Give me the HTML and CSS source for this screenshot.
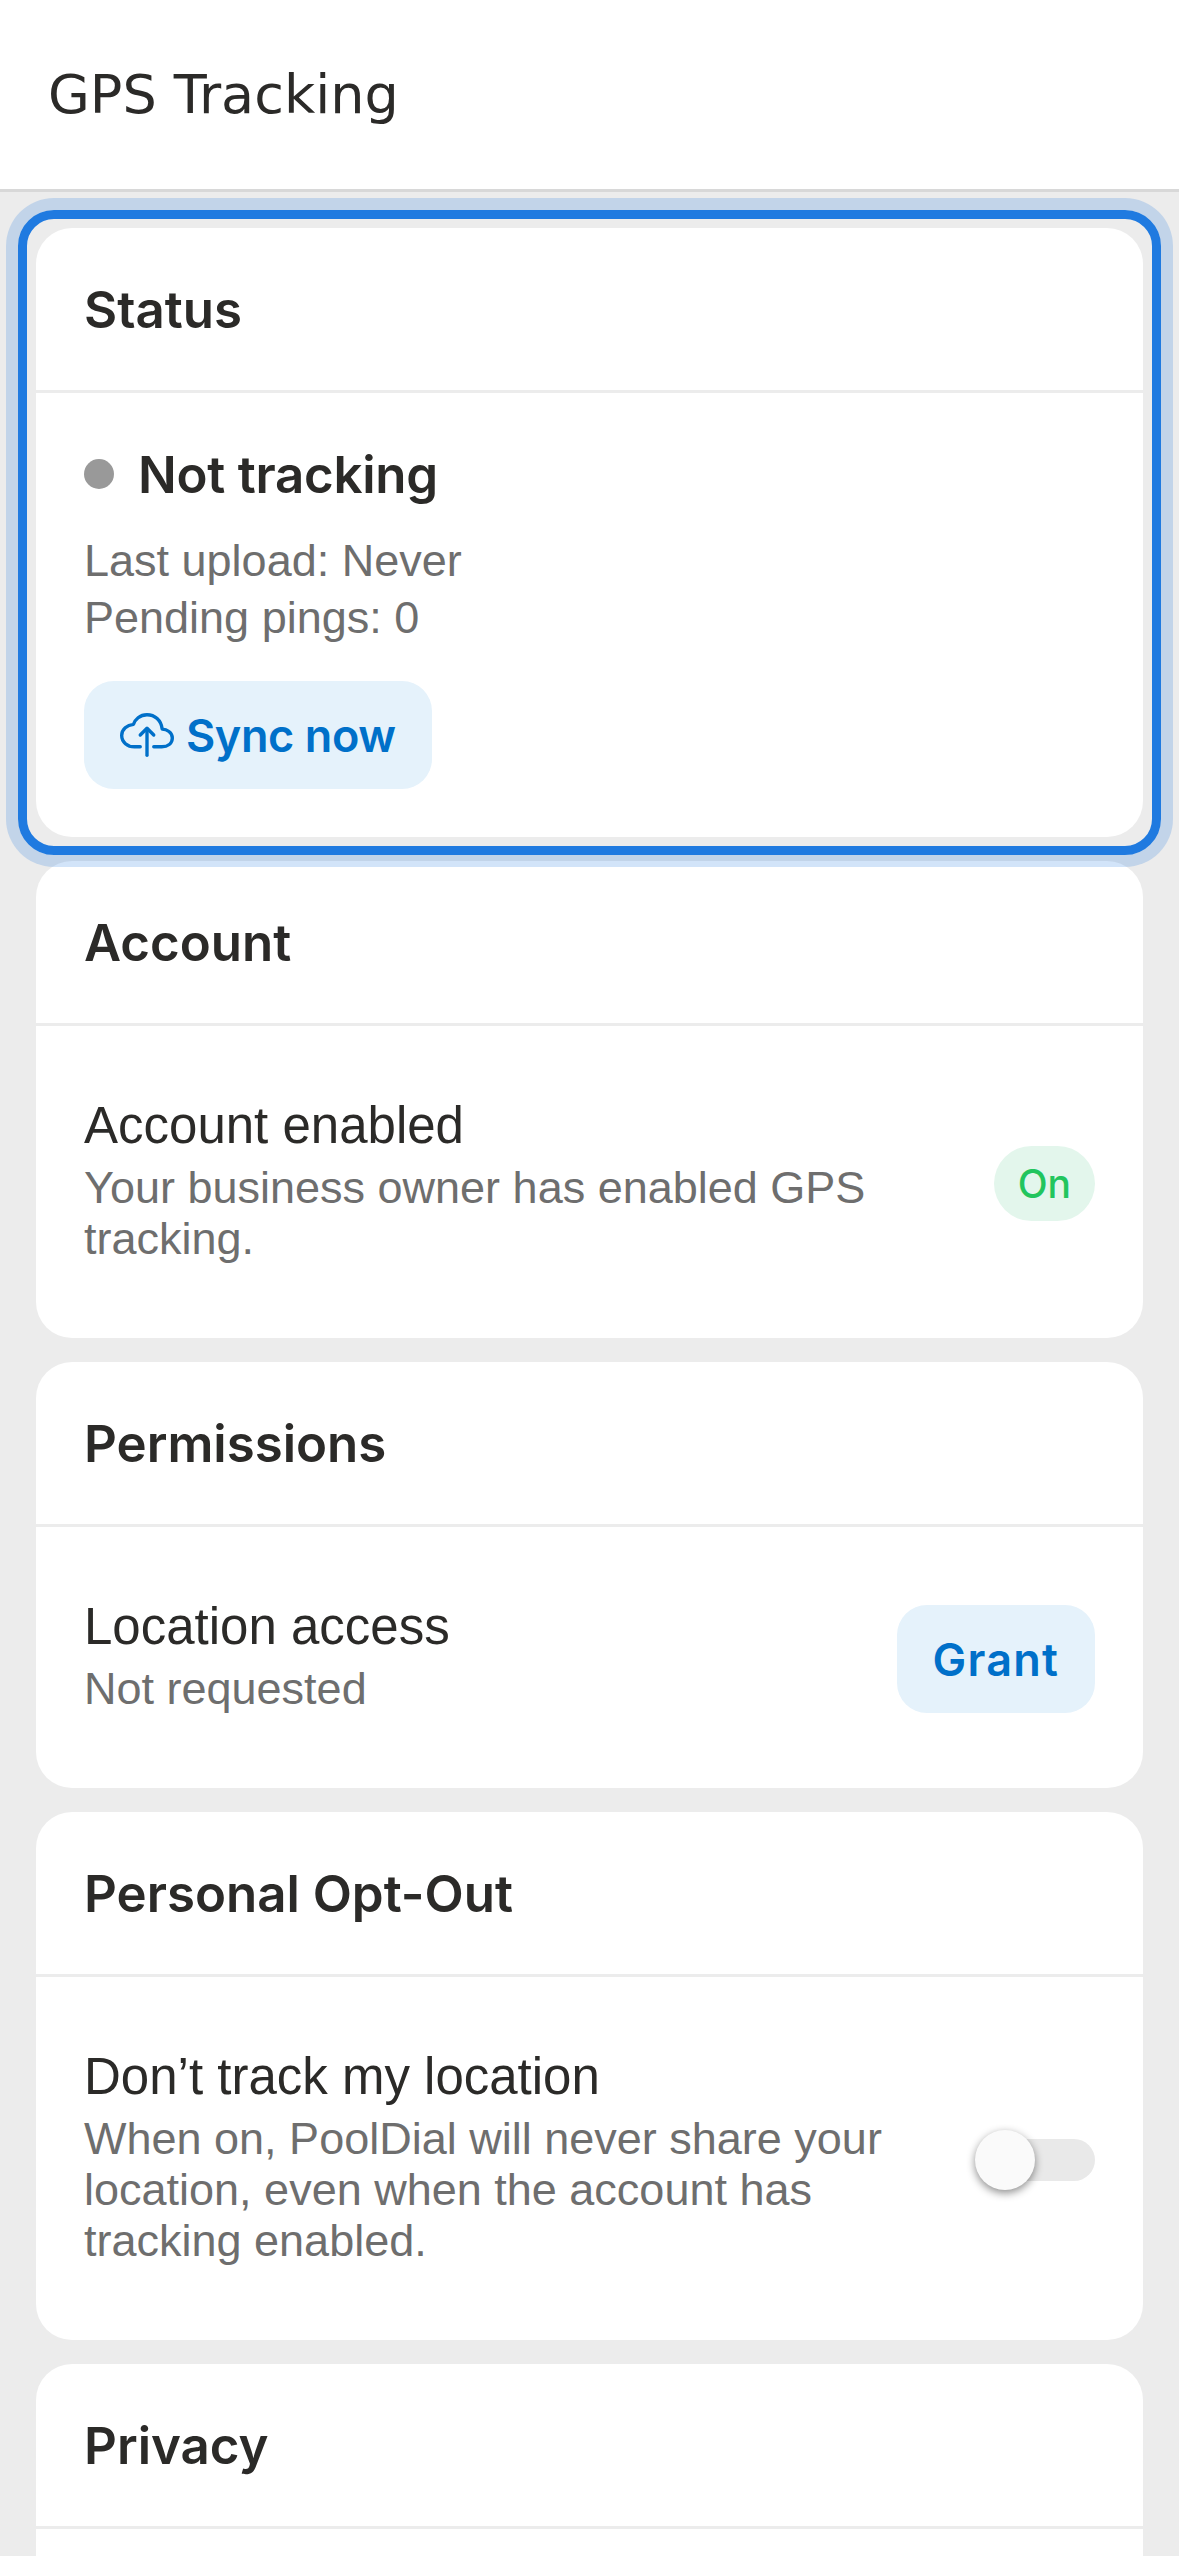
FILE: index.html
```html
<!DOCTYPE html>
<html lang="en">
<head>
    <meta charset="UTF-8">
    <meta name="viewport" content="width=device-width, initial-scale=1.0">
    <title>GPS Tracking</title>
    <link rel="stylesheet" href="styles.css">
</head>
<body>
    <header class="topBar">
        <h1 class="topTitle">GPS Tracking</h1>
    </header>

    <main class="content">
        <!-- status card has keyboard focus in the screenshot -->
        <section class="card focused">
            <h2 class="cardTitle">Status</h2>
            <div class="statusBody">
                <div class="statusRow">
                    <span class="statusDot"></span>
                    <span class="statusText">Not tracking</span>
                </div>
                <p class="statusLine">Last upload: Never</p>
                <p class="statusLine">Pending pings: 0</p>
                <button class="softButton syncButton">
                    <svg class="syncIcon" viewBox="0 0 512 512" fill="none" stroke="currentColor" stroke-width="32" stroke-linecap="round" stroke-linejoin="round">
                        <path d="M320 367.79h76c55 0 100-29.21 100-83.6 0-53.79-53-81.51-96-83.6-8.89-85.06-71-136.8-144-136.8-69 0-113.44 45.79-128 91.2-60 5.7-112 43.88-112 106.4s54 106.4 120 106.4h56"/>
                        <polyline points="320 255.79 256 191.79 192 255.79"/>
                        <line x1="256" y1="448.21" x2="256" y2="207.79"/>
                    </svg>
                    Sync now
                </button>
            </div>
        </section>

        <section class="card">
            <h2 class="cardTitle">Account</h2>
            <div class="row">
                <div class="rowText">
                    <div class="rowLabel">Account enabled</div>
                    <div class="rowHint">Your business owner has enabled GPS tracking.</div>
                </div>
                <span class="pill">On</span>
            </div>
        </section>

        <section class="card">
            <h2 class="cardTitle">Permissions</h2>
            <div class="row">
                <div class="rowText">
                    <div class="rowLabel">Location access</div>
                    <div class="rowHint">Not requested</div>
                </div>
                <button class="softButton grantButton">Grant</button>
            </div>
        </section>

        <section class="card">
            <h2 class="cardTitle">Personal Opt-Out</h2>
            <div class="row">
                <div class="rowText">
                    <div class="rowLabel">Don’t track my location</div>
                    <div class="rowHint">When on, PoolDial will never share your location, even when the account has tracking enabled.</div>
                </div>
                <div class="switch"><span class="switchThumb"></span></div>
            </div>
        </section>

        <section class="card lastCard">
            <h2 class="cardTitle">Privacy</h2>
        </section>
    </main>
</body>
</html>
```

FILE: styles.css
```css
* {
    box-sizing: border-box;
}
html, body {
    margin: 0;
    height: 100%;
}
body {
    height: 2556px;
    overflow: hidden;
    background-color: #ececec;
    color: #2b2a28;
    font-family: "Liberation Sans", Arial, sans-serif;
}
.topBar {
    height: 192px;
    display: flex;
    align-items: center;
    padding: 0 48px;
    background-color: #fff;
    border-bottom: 3px solid #d8d8d8;
}
.topTitle {
    margin: 0;
    font-family: "DejaVu Sans", sans-serif;
    font-size: 54px;
    font-weight: 400;
}
.content {
    display: flex;
    flex-direction: column;
    gap: 24px;
    padding: 36px 36px 0;
}
.card {
    background-color: #fff;
    border-radius: 36px;
}
.focused {
    position: relative;
    z-index: 1;
}
.focused::after {
    content: "";
    position: absolute;
    inset: -18px;
    border: 9px solid #1f7ae0;
    border-radius: 36px;
    box-shadow: 0 0 0 12px rgba(31, 122, 224, 0.2);
    pointer-events: none;
}
.lastCard {
    height: 400px;
}
.cardTitle {
    height: 165px;
    margin: 0;
    padding: 0 48px;
    display: flex;
    align-items: center;
    border-bottom: 3px solid #ececec;
    font-family: Inter, sans-serif;
    font-size: 51px;
    font-weight: 600;
}
.statusBody {
    padding: 48px;
}
.statusRow {
    display: flex;
    align-items: center;
    gap: 24px;
    height: 66px;
    margin-bottom: 25px;
}
.statusDot {
    width: 30px;
    height: 30px;
    border-radius: 50%;
    background-color: #999;
}
.statusText {
    font-family: Inter, sans-serif;
    font-size: 51px;
    font-weight: 600;
    letter-spacing: -0.25px;
}
.statusLine {
    margin: 0;
    font-size: 45px;
    line-height: 57px;
    color: #6e6e6e;
}
.softButton {
    height: 108px;
    display: inline-flex;
    align-items: center;
    padding: 0 36px;
    border: none;
    border-radius: 30px;
    background-color: #e5f2fb;
    color: #0070c9;
    font-family: Inter, sans-serif;
    font-size: 45px;
    font-weight: 600;
}
.syncButton {
    gap: 12px;
    margin-top: 35px;
    letter-spacing: -0.4px;
}
.grantButton {
    letter-spacing: 1.2px;
}
.syncIcon {
    width: 54px;
    height: 54px;
}
.row {
    display: flex;
    align-items: center;
    justify-content: space-between;
    gap: 48px;
    padding: 77px 48px 74px;
}
.rowText {
    flex: 1;
}
.rowLabel {
    font-size: 51px;
    line-height: 46px;
    margin-bottom: 13px;
}
.rowHint {
    font-size: 45px;
    line-height: 51px;
    color: #6e6e6e;
}
.pill {
    display: flex;
    align-items: center;
    height: 75px;
    padding: 0 24px;
    border-radius: 38px;
    background-color: #e3f6ec;
    color: #22c55e;
    font-family: Inter, sans-serif;
    font-size: 39px;
    font-weight: 500;
}
.switch {
    position: relative;
    width: 102px;
    height: 42px;
    border-radius: 21px;
    background-color: #e9e9e9;
}
.switchThumb {
    position: absolute;
    top: -9px;
    left: -18px;
    width: 60px;
    height: 60px;
    border-radius: 50%;
    background-color: #fafafa;
    box-shadow: 0 3px 9px rgba(0, 0, 0, 0.45);
}
```
